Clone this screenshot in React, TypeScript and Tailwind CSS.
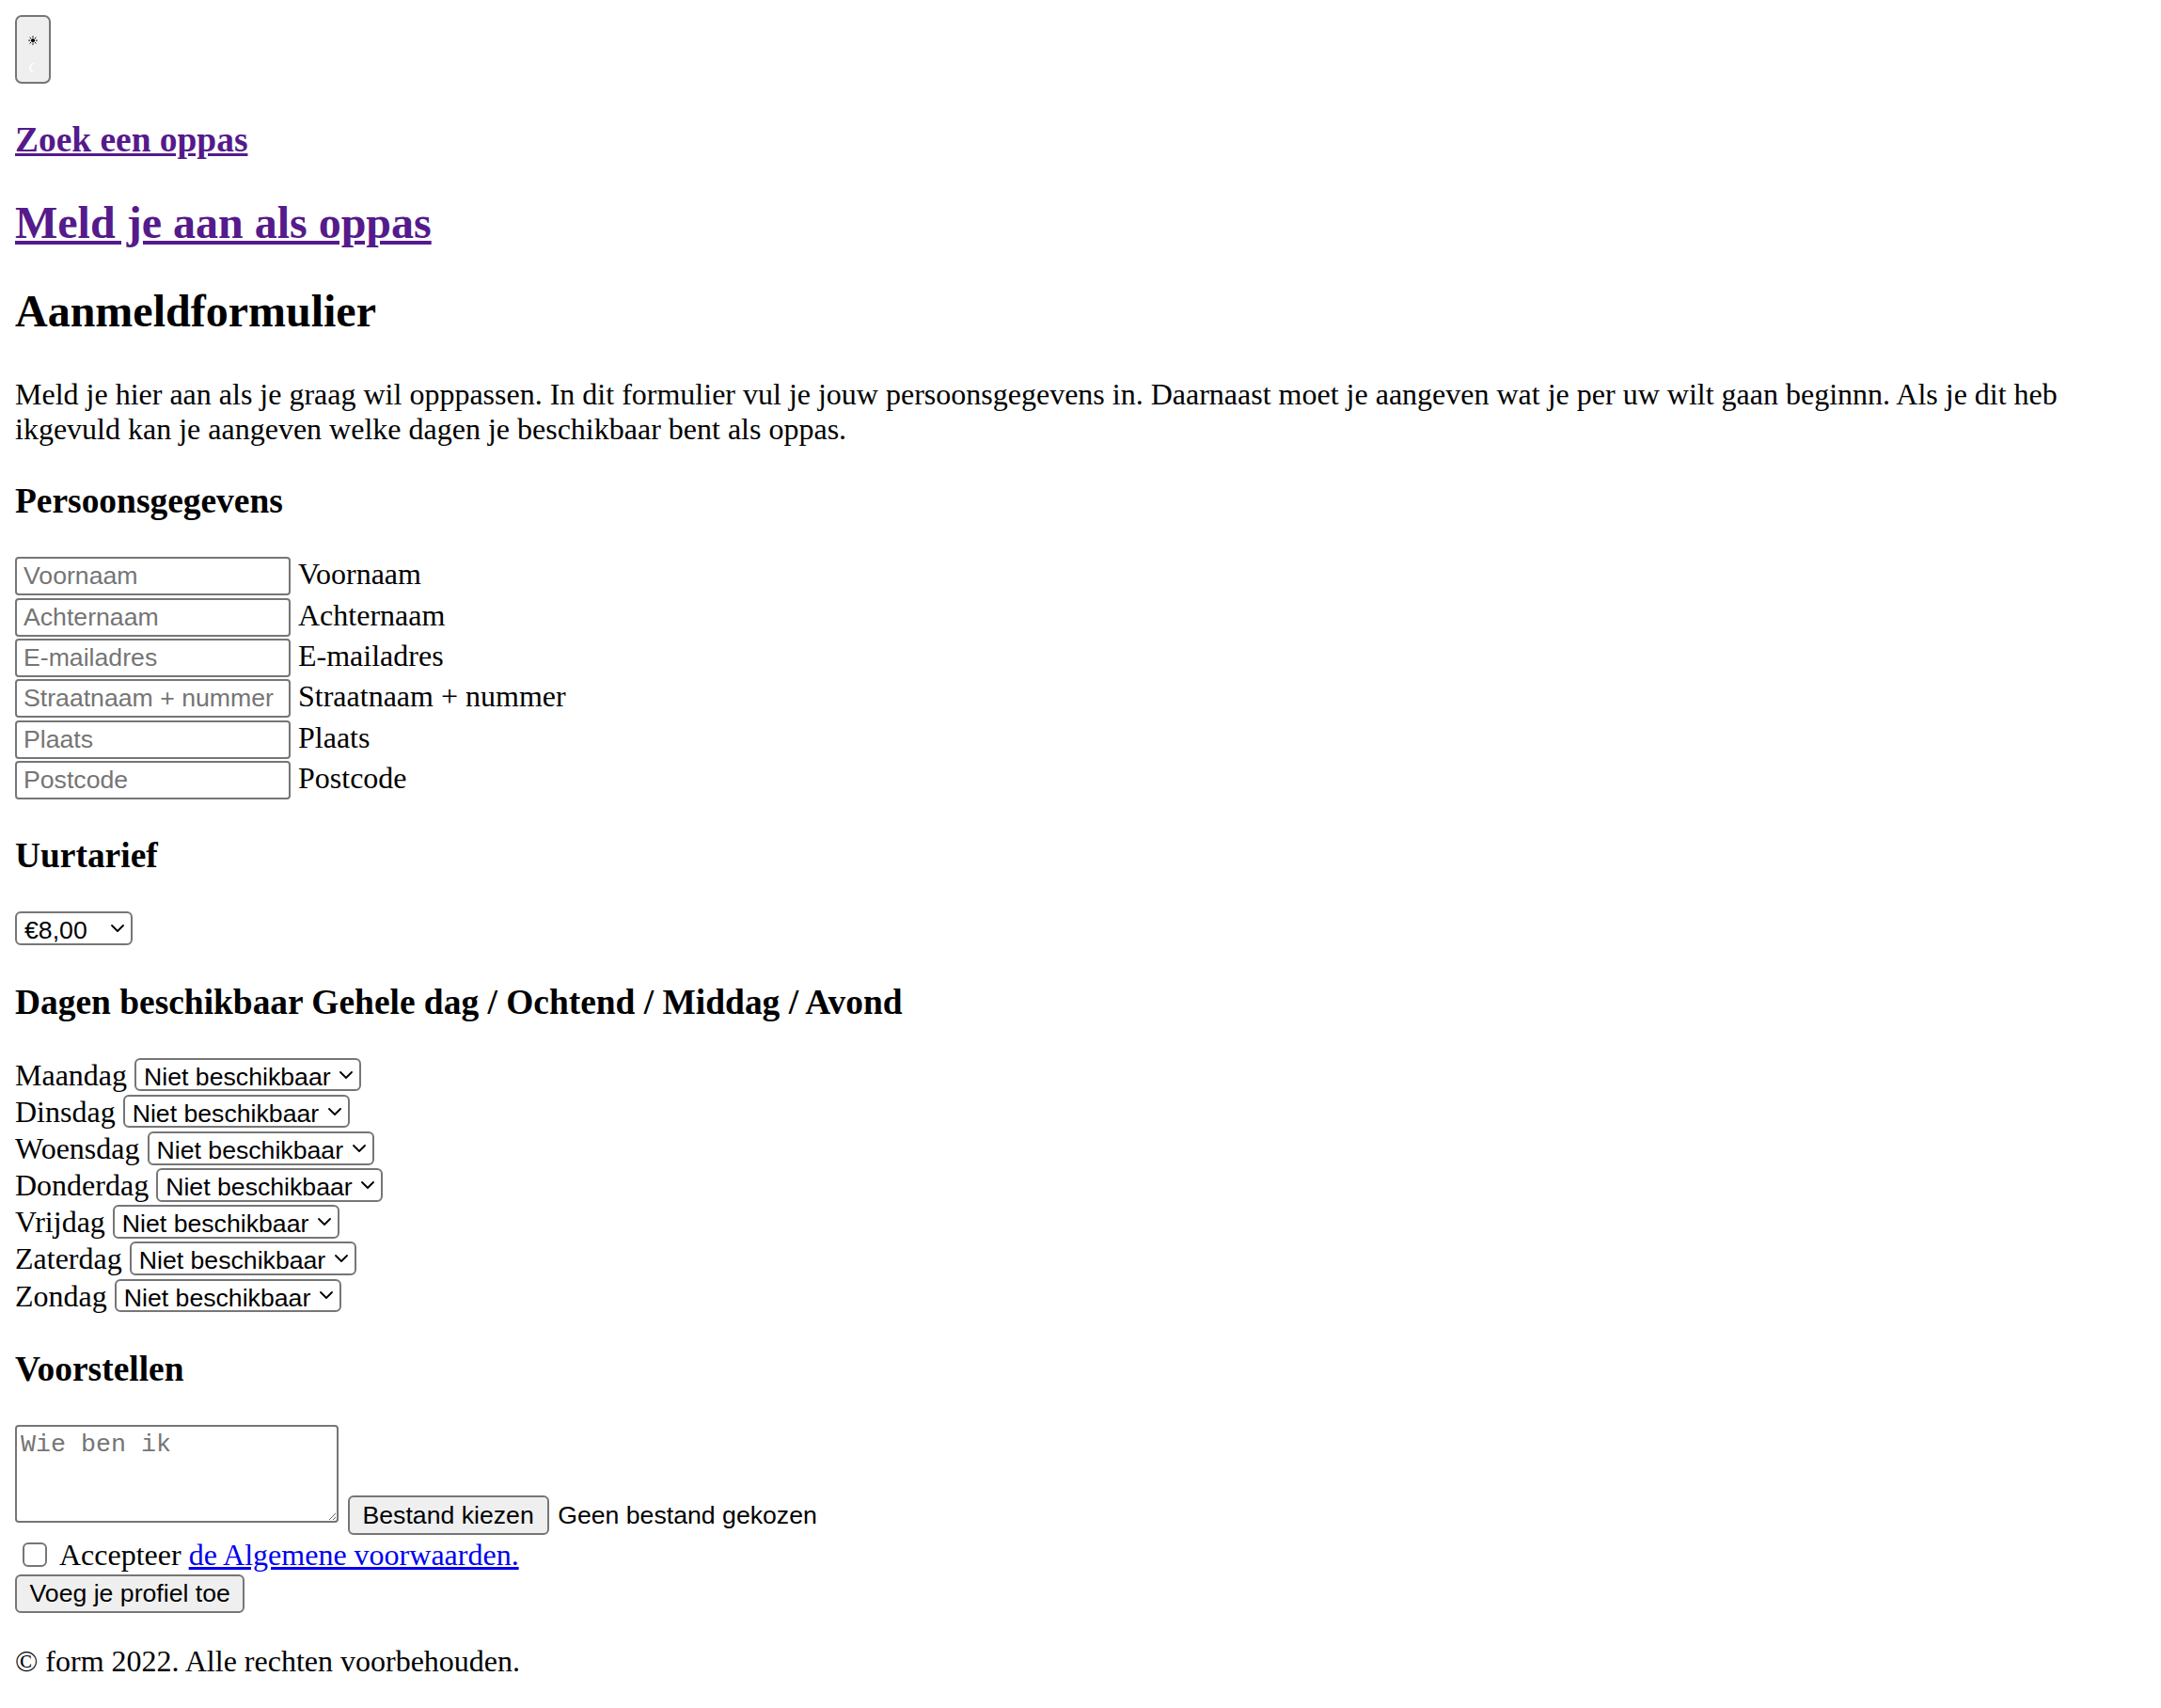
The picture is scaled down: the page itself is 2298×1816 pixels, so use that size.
import React from "react";

const inputCls =
  "w-[293px] h-[41px] border-2 border-[#767676] rounded-[4px] pl-[7px] pr-[4px] py-[2px] bg-white text-black font-['Liberation_Sans',Arial,sans-serif] text-[26.67px] placeholder:text-[#757575] outline-none";

const selectCls =
  "appearance-none h-[35.4px] border-2 border-[#767676] rounded-[6px] bg-white text-black pl-[8px] pr-[30px] font-['Liberation_Sans',Arial,sans-serif] text-[26.67px] outline-none";

const buttonCls =
  "h-[41.6px] border-2 border-[#767676] rounded-[6px] bg-[#efefef] text-black font-['Liberation_Sans',Arial,sans-serif] text-[26.67px] leading-[normal]";

function Chevron() {
  return (
    <svg
      className="absolute right-[9px] top-1/2 -translate-y-1/2 pointer-events-none"
      width="14"
      height="9"
      viewBox="0 0 14 9"
      fill="none"
    >
      <path d="M1 1.5 L7 7.5 L13 1.5" stroke="#000" strokeWidth="1.8" strokeLinecap="round" strokeLinejoin="round" />
    </svg>
  );
}

function Select({ width, options }: { width: string; options: string[] }) {
  return (
    <span className="relative inline-flex">
      <select className={`${selectCls} ${width}`} defaultValue={options[0]}>
        {options.map((o) => (
          <option key={o}>{o}</option>
        ))}
      </select>
      <Chevron />
    </span>
  );
}

const fields = ["Voornaam", "Achternaam", "E-mailadres", "Straatnaam + nummer", "Plaats", "Postcode"];
const days = ["Maandag", "Dinsdag", "Woensdag", "Donderdag", "Vrijdag", "Zaterdag", "Zondag"];
const dayOptions = ["Niet beschikbaar", "Gehele dag", "Ochtend", "Middag", "Avond"];
const rates = ["€8,00", "€9,00", "€10,00", "€11,00", "€12,00"];

export default function App() {
  return (
    <div className="min-h-screen bg-white text-black font-['Liberation_Serif','Times_New_Roman',serif] text-[32px] leading-[36.8px] pt-[16px] px-[16px] pb-[40px]">
      {/* theme toggle */}
      <button className="w-[38px] h-[73px] border-2 border-[#767676] rounded-[7px] bg-[#efefef] flex flex-col items-center pt-[19.7px] gap-[18px]">
        <svg width="10" height="10" viewBox="0 0 10 10" className="shrink-0">
          <circle cx="5" cy="5" r="2.1" fill="#000" />
          <g stroke="#000" strokeWidth="1" strokeLinecap="round">
            <line x1="5" y1="0.6" x2="5" y2="1.9" />
            <line x1="5" y1="8.1" x2="5" y2="9.4" />
            <line x1="0.6" y1="5" x2="1.9" y2="5" />
            <line x1="8.1" y1="5" x2="9.4" y2="5" />
            <line x1="1.9" y1="1.9" x2="2.8" y2="2.8" />
            <line x1="7.2" y1="7.2" x2="8.1" y2="8.1" />
            <line x1="1.9" y1="8.1" x2="2.8" y2="7.2" />
            <line x1="7.2" y1="2.8" x2="8.1" y2="1.9" />
          </g>
        </svg>
        <svg width="10" height="12" viewBox="0 0 10 12" className="shrink-0">
          <path d="M7.5 1.2 A5 5 0 1 0 7.5 10.8 A4.2 4.6 0 0 1 7.5 1.2 Z" fill="#fff" />
        </svg>
      </button>

      <h3 className="mt-[38.3px] text-[37.44px] leading-[43.06px] font-bold">
        <a href="#" className="text-[#551a8b] underline">
          Zoek een oppas
        </a>
      </h3>
      <h2 className="mt-[39px] text-[48px] leading-[55.2px] font-bold">
        <a href="#" className="text-[#551a8b] underline">
          Meld je aan als oppas
        </a>
      </h2>

      <h2 className="mt-[38.6px] text-[48px] leading-[55.2px] font-bold">Aanmeldformulier</h2>

      <p className="mt-[42.5px]">
        Meld je hier aan als je graag wil opppassen. In dit formulier vul je jouw persoonsgegevens in. Daarnaast moet
        je aangeven wat je per uw wilt gaan beginnn. Als je dit heb ikgevuld kan je aangeven welke dagen je beschikbaar
        bent als oppas.
      </p>

      <form onSubmit={(e) => e.preventDefault()}>
        <h3 className="mt-[36.6px] text-[37.44px] leading-[43.06px] font-bold">Persoonsgegevens</h3>
        <div className="mt-[38.1px] flex flex-col">
          {fields.map((f) => (
            <div key={f} className="flex items-baseline gap-[8px] h-[43.33px]">
              <input type="text" placeholder={f} className={inputCls} />
              <label>{f}</label>
            </div>
          ))}
        </div>

        <h3 className="mt-[35.5px] text-[37.44px] leading-[43.06px] font-bold">Uurtarief</h3>
        <div className="mt-[38.7px] flex">
          <Select width="w-[125px]" options={rates} />
        </div>

        <h3 className="mt-[38.7px] text-[37.44px] leading-[43.06px] font-bold">
          Dagen beschikbaar Gehele dag / Ochtend / Middag / Avond
        </h3>
        <div className="mt-[38.4px] flex flex-col">
          {days.map((d) => (
            <div key={d} className="flex items-baseline gap-[8px] h-[39.1px]">
              <label>{d}</label>
              <Select width="w-[241px]" options={dayOptions} />
            </div>
          ))}
        </div>

        <h3 className="mt-[34.9px] text-[37.44px] leading-[43.06px] font-bold">Voorstellen</h3>
        <div className="mt-[38.8px] flex h-[117px]">
          <textarea
            placeholder="Wie ben ik"
            className="resize w-[344px] h-[104px] shrink-0 border-2 border-[#767676] rounded-[4px] px-[4px] py-[4px] bg-white font-['Liberation_Mono','Courier_New',monospace] text-[26.67px] leading-[normal] placeholder:text-[#757575] outline-none"
          />
          <div className="flex items-center ml-[9.5px] mt-[75px] self-start">
            <button type="button" className={`${buttonCls} px-[14px]`}>
              Bestand kiezen
            </button>
            <span className="ml-[9.4px] font-['Liberation_Sans',Arial,sans-serif] text-[26.67px]">
              Geen bestand gekozen
            </span>
          </div>
        </div>

        <div className="flex items-start h-[41.3px]">
          <input
            type="checkbox"
            className="appearance-none shrink-0 ml-[8px] mt-[7.6px] w-[26px] h-[26px] border-2 border-[#767676] rounded-[6px] bg-white"
          />
          <span className="ml-[13px] mt-[2.9px]">
            Accepteer{" "}
            <a href="#" className="text-[#0000ee] underline">
              de Algemene voorwaarden.
            </a>
          </span>
        </div>

        <button type="submit" className={`${buttonCls} px-[13.5px]`}>
          Voeg je profiel toe
        </button>
      </form>

      <p className="mt-[32.6px]">© form 2022. Alle rechten voorbehouden.</p>
    </div>
  );
}
